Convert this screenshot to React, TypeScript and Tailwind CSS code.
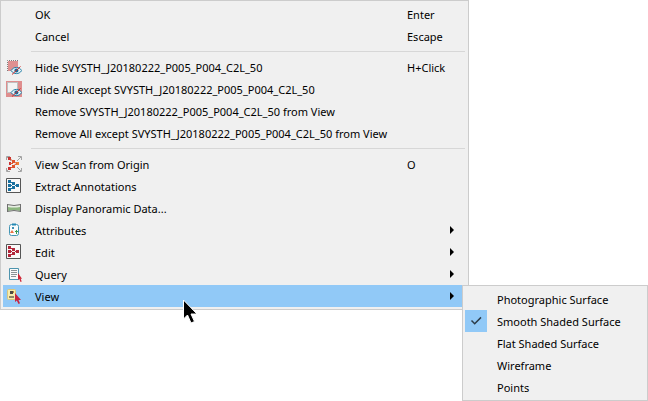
import React from 'react'

// 16px menu icons, drawn on a 16x16 grid
const Svg = ({ children }: { children: React.ReactNode }) => (
  <svg viewBox="0 0 16 16" fill="none" className="h-4 w-4" aria-hidden>
    {children}
  </svg>
)

const HiddenEye = () => (
  <>
    <path d="M5 11.6c1.6-2.3 3.4-3.2 5.4-3.2s3.9.9 5.3 3.2c-1.4 2.1-3.3 3-5.3 3s-3.8-.9-5.4-3z" fill="#e6f0f4" stroke="#2380a8" />
    <circle cx="10.4" cy="11.5" r="2" fill="#126d9a" />
    <path d="M6 15.5l8.5-8" stroke="#d42a2a" />
  </>
)

const HideIcon = () => (
  <Svg>
    <path d="M1 1h11v11H1z" fill="#df9090" />
    <path d="M1.5 12V1.5H12" stroke="#f4f0f0" />
    <path d="M1.5 12V1.5H12" stroke="#7d7d7d" strokeDasharray="1 1" />
    <HiddenEye />
  </Svg>
)

const HideOthersIcon = () => (
  <Svg>
    <path d="M0 0h16v16H0z" fill="#df8e8e" />
    <path d="M1 1h11v11H1z" fill="#f3f3f3" />
    <path d="M1.5 1.5h10v10h-10z" stroke="#8d8d8d" strokeDasharray="1 1" />
    <HiddenEye />
  </Svg>
)

const ScanIcon = () => (
  <Svg>
    <path d="M.5 4V.5H4M12 .5h3.5V4M15.5 12v3.5H12M4 15.5H.5V12M1 1l4 4M15 1l-4 4M15 15l-4-4M1 15l4-4" stroke="#a3a3a3" />
    <path d="M2 1h3v3H2zM3 6h2v3H3zM2 11h3v3H2z" fill="#c83232" />
    <path d="M6 4h3v3H6zM6 9h3v3H6z" fill="#de4f2b" />
    <path d="M10 6h3v3h-3z" fill="#ef7d35" />
    <path d="M4 2.5l3 3 4 2-4 2.5-3 3M4 7.5h3" stroke="#de5a30" />
  </Svg>
)

const BlocksIcon = ({ color }: { color: string }) => (
  <Svg>
    <path d="M.5.5h14v14H.5z" fill="#f8f8f8" stroke="#555" />
    <path d="M2 2h3v3H2zM2 6h3v3H2zM2 10h3v3H2zM6 4h3v3H6zM6 8h3v3H6zM10 6h3v3h-3z" fill={color} />
    <path d="M5 4.5h1M5 7.5h1M5 10.5h1M9 7.5h1" stroke={color} />
  </Svg>
)

const PanoramaIcon = () => (
  <Svg>
    <path d="M1.5 4.5q6.5 2 13 0v7q-6.5-2-13 0z" fill="#e8eee4" />
    <path d="M2 7q6 1 12 0v4Q8 9 2 11z" fill="#8cb67f" />
    <path d="M1.5 4v8M14.5 4v8M1 4.5q7 2 14 0M1 11.5q7-2 14 0" stroke="#6f6f6f" />
  </Svg>
)

const AttributesIcon = () => (
  <Svg>
    <rect x="3.5" y="2.5" width="9" height="11" rx="2" fill="#fafcfc" stroke="#4395b5" />
    <path d="M6 2.5h4" stroke="#2489b5" strokeWidth="2" />
    <path d="M6 5h2v2H6z" fill="#3f8fb4" />
    <path d="M6 8l2 3H4z" fill="#ed7044" />
    <path d="M10.5 8v4M9 9.5h3" stroke="#3c9a4c" />
  </Svg>
)

const QueryIcon = () => (
  <Svg>
    <path d="M3.5 2.5h9v11h-9z" fill="#fafafa" stroke="#4e94ae" />
    <path d="M5 4.5h6M5 6.5h6M5 8.5h6M5 10.5h5" stroke="#8b9296" />
    <path d="M12 7v7l1.3-1 1.2 3 1.2-.5-1-2.7H16z" fill="#cf2839" />
  </Svg>
)

const ViewIcon = () => (
  <Svg>
    <rect x="1.5" y="1.5" width="8" height="10" rx="1" fill="#f7ecad" stroke="#d8c67c" />
    <path d="M4 3h3v3H4z" fill="#4e4a43" />
    <path d="M3 8h5v2H3z" fill="#8f866a" />
    <path d="M7 3h1v2H7z" fill="#bd8b35" />
    <path d="M9 5v9l1.8-1.5 1.7 3.5 1.5-.8-1.5-3.2H15z" fill="#c92440" />
  </Svg>
)

const Arrow = () => (
  <svg viewBox="0 0 4 8" className="ml-[43px] h-2 w-1" aria-hidden>
    <path d="M0 0l4 4-4 4z" fill="#000" />
  </svg>
)

const Check = () => (
  <svg viewBox="0 0 22 22" fill="none" className="h-[22px] w-[22px] bg-[#91c9f7]" aria-hidden>
    <path d="M6.5 10.5l3.2 3.2L16 7.4" stroke="#2d3c48" strokeWidth="1.5" />
  </svg>
)

const Pointer = () => (
  <svg viewBox="0 0 16 26" className="pointer-events-none absolute top-[14px] left-[180px] h-[26px] w-4" aria-hidden>
    <path d="M.5 1v19l4-4L8 24l3.5-1.5L8 15h6z" fill="#000" stroke="#fff" />
  </svg>
)

type Item = { label: string; shortcut?: string; icon?: React.ReactNode; more?: boolean }

const name = 'SVYSTH_J20180222_P005_P004_C2L_50'

const groups: Item[][] = [
  [
    { label: 'OK', shortcut: 'Enter' },
    { label: 'Cancel', shortcut: 'Escape' },
  ],
  [
    { label: `Hide ${name}`, shortcut: 'H+Click', icon: <HideIcon /> },
    { label: `Hide All except ${name}`, icon: <HideOthersIcon /> },
    { label: `Remove ${name} from View` },
    { label: `Remove All except ${name} from View` },
  ],
  [
    { label: 'View Scan from Origin', shortcut: 'O', icon: <ScanIcon /> },
    { label: 'Extract Annotations', icon: <BlocksIcon color="#176f9f" /> },
    { label: 'Display Panoramic Data...', icon: <PanoramaIcon /> },
    { label: 'Attributes', icon: <AttributesIcon />, more: true },
    { label: 'Edit', icon: <BlocksIcon color="#b3263a" />, more: true },
    { label: 'Query', icon: <QueryIcon />, more: true },
    { label: 'View', icon: <ViewIcon />, more: true },
  ],
]

const surfaces = ['Photographic Surface', 'Smooth Shaded Surface', 'Flat Shaded Surface', 'Wireframe', 'Points']

const Submenu = () => (
  <ul role="menu" aria-label="View" className="absolute top-0 left-full -ml-1 w-[186px] border border-[#ccc] bg-[#f0f0f0] p-[2px]">
    {surfaces.map((s) => {
      const checked = s === 'Smooth Shaded Surface'
      return (
        <li key={s} role="none">
          <button type="button" role="menuitemradio" aria-checked={checked} className="flex h-[22px] w-full items-center text-left">
            <span className="w-8 shrink-0">{checked && <Check />}</span>
            <span className="pt-[2px] whitespace-nowrap">{s}</span>
          </button>
        </li>
      )
    })}
  </ul>
)

const MenuRow = ({ item }: { item: Item }) => {
  const open = item.label === 'View'
  return (
    <li role="none" className={open ? 'relative bg-[#91c9f7]' : ''}>
      <button
        type="button"
        role="menuitem"
        aria-haspopup={item.more ? 'menu' : undefined}
        aria-expanded={item.more ? open : undefined}
        className="flex h-[22px] w-full items-center text-left"
      >
        <span className="w-8 shrink-0 pl-[3px]">{item.icon}</span>
        <span className="flex-1 pt-[2px] whitespace-nowrap">{item.label}</span>
        {item.more ? (
          <span className="w-[59px] shrink-0"><Arrow /></span>
        ) : (
          <span className="w-[59px] shrink-0 pt-[2px]">{item.shortcut}</span>
        )}
      </button>
      {open && <Submenu />}
      {open && <Pointer />}
    </li>
  )
}

const App: React.FC = () => {
  return (
    <main className="min-h-screen bg-white pr-[179px] font-['Noto_Sans',sans-serif] text-[11px] leading-4 text-black">
      <ul role="menu" className="border border-[#ccc] bg-[#f0f0f0] p-[2px]">
        {groups.map((group, i) => (
          <React.Fragment key={group[0].label}>
            {i > 0 && <li role="separator" className="my-1 mr-px ml-7 h-px bg-[#d7d7d7]" />}
            {group.map((item) => (
              <MenuRow key={item.label} item={item} />
            ))}
          </React.Fragment>
        ))}
      </ul>
    </main>
  )
}

export default App
